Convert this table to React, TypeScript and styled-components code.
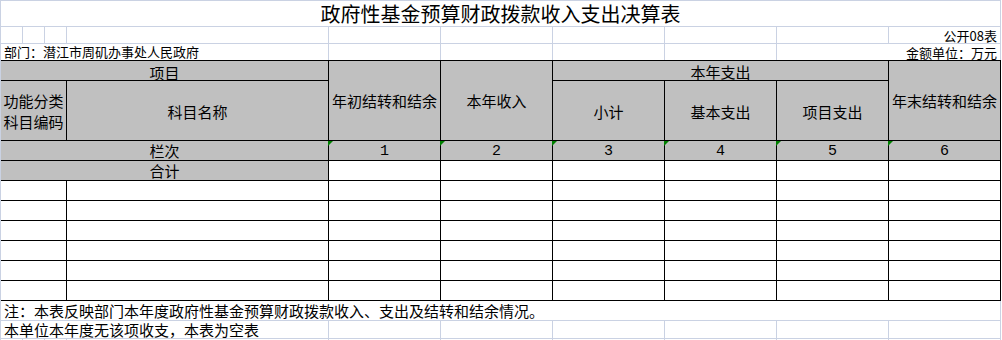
import styled, { createGlobalStyle } from "styled-components";

/* Colours */
const gridLine = "#cad2e3";
const headerGray = "#c0c0c0";
const flagGreen = "#008000";

/* Sheet columns outside the table: three narrow ones, the wide name column, six value columns */
const SHEET_COLS = "22px 22px 22px 262px repeat(6, 112px)";

const GlobalStyle = createGlobalStyle`
	body {
		margin: 0;
		background: #fff;
		color: #000;
		font-family: "Noto Sans CJK SC", "Noto Sans", sans-serif;
	}
`;

const Sheet = styled.div`
	width: 1000px;
	border-left: 1px solid ${gridLine};
	border-top: 1px solid ${gridLine};
`;

const TitleRow = styled.div`
	box-sizing: border-box;
	height: 26px;
	display: flex;
	align-items: flex-end;
	justify-content: center;
	padding-bottom: 2px;
	border-right: 1px solid ${gridLine};
	border-bottom: 1px solid ${gridLine};
	font-size: 20px;
	line-height: 20px;
`;

const SheetRow = styled.div<{ $height: number; $lined?: boolean }>`
	box-sizing: border-box;
	display: grid;
	grid-template-columns: ${SHEET_COLS};
	height: ${(p) => p.$height}px;
	border-bottom: ${(p) => (p.$lined ? `1px solid ${gridLine}` : "none")};
`;

const SheetCell = styled.div<{ $span?: number; $right?: boolean; $size?: number; $lift?: number }>`
	grid-column: span ${(p) => p.$span ?? 1};
	display: flex;
	align-items: flex-end;
	justify-content: ${(p) => (p.$right ? "flex-end" : "flex-start")};
	padding: 0 ${(p) => (p.$right ? 3 : 0)}px ${(p) => p.$lift ?? 1}px ${(p) => (p.$right ? 0 : 3)}px;
	border-right: 1px solid ${gridLine};
	font-size: ${(p) => p.$size ?? 13}px;
	line-height: ${(p) => p.$size ?? 13}px;
	white-space: nowrap;
`;

const NoteRow = styled.div`
	box-sizing: border-box;
	height: 20px;
	display: flex;
	align-items: flex-end;
	padding: 0 0 2px 3px;
	border-right: 1px solid ${gridLine};
	border-bottom: 1px solid ${gridLine};
	font-size: 15px;
	line-height: 15px;
	white-space: nowrap;
`;

const Table = styled.div`
	box-sizing: border-box;
	width: 1000px;
	display: grid;
	grid-template-columns: 65px 261px repeat(6, 111px);
	grid-template-rows: 19px 59px 19px 19px repeat(6, 19px);
	gap: 1px;
	padding: 1px 1px 1px 0;
	background: #000;
`;

const Cell = styled.div<{ $col?: string; $row?: string; $gray?: boolean; $drop?: number }>`
	grid-column: ${(p) => p.$col ?? "auto"};
	grid-row: ${(p) => p.$row ?? "auto"};
	display: flex;
	align-items: center;
	justify-content: center;
	text-align: center;
	padding-top: ${(p) => p.$drop ?? 0}px;
	background: ${(p) => (p.$gray ? headerGray : "#fff")};
	font-size: 15px;
	line-height: 15px;
`;

const StackedLabel = styled.span`
	display: flex;
	flex-direction: column;
	line-height: 21px;
`;

/* column number cells carry Excel's green "number stored as text" flag */
const NumberCell = styled(Cell)`
	position: relative;
	font-family: "Liberation Mono", "DejaVu Sans Mono", monospace;

	&::before {
		content: "";
		position: absolute;
		left: -1px;
		top: 0;
		border-top: 5px solid ${flagGreen};
		border-right: 5px solid transparent;
	}
`;

const valueColumns = [3, 4, 5, 6, 7, 8];

export default function App() {
	return (
		<>
			<GlobalStyle />
			<Sheet>
				<TitleRow>政府性基金预算财政拨款收入支出决算表</TitleRow>

				<SheetRow $height={17} $lined>
					{Array.from({ length: 9 }).map((_, i) => (
						<SheetCell key={i} />
					))}
					<SheetCell $right>公开08表</SheetCell>
				</SheetRow>

				<SheetRow $height={16}>
					<SheetCell $span={4} $lift={2}>
						部门：潜江市周矶办事处人民政府
					</SheetCell>
					<SheetCell />
					<SheetCell />
					<SheetCell />
					<SheetCell />
					<SheetCell $span={2} $right>
						金额单位：万元
					</SheetCell>
				</SheetRow>

				<Table>
					<Cell $col="1 / 3" $row="1" $gray $drop={3}>
						项目
					</Cell>
					<Cell $col="3" $row="1 / 3" $gray>
						年初结转和结余
					</Cell>
					<Cell $col="4" $row="1 / 3" $gray>
						本年收入
					</Cell>
					<Cell $col="5 / 8" $row="1" $gray $drop={1}>
						本年支出
					</Cell>
					<Cell $col="8" $row="1 / 3" $gray>
						年末结转和结余
					</Cell>

					<Cell $col="1" $row="2" $gray $drop={1}>
						<StackedLabel>
							<span>功能分类</span>
							<span>科目编码</span>
						</StackedLabel>
					</Cell>
					<Cell $col="2" $row="2" $gray $drop={1}>
						科目名称
					</Cell>
					<Cell $col="5" $row="2" $gray $drop={1}>
						小计
					</Cell>
					<Cell $col="6" $row="2" $gray $drop={1}>
						基本支出
					</Cell>
					<Cell $col="7" $row="2" $gray $drop={1}>
						项目支出
					</Cell>

					<Cell $col="1 / 3" $row="3" $gray>
						栏次
					</Cell>
					{valueColumns.map((col, i) => (
						<NumberCell key={col} $col={String(col)} $row="3" $gray $drop={2}>
							{i + 1}
						</NumberCell>
					))}

					<Cell $col="1 / 3" $row="4" $gray>
						合计
					</Cell>
					{valueColumns.map((col) => (
						<Cell key={col} $col={String(col)} $row="4" />
					))}

					{Array.from({ length: 6 * 8 }).map((_, i) => (
						<Cell key={`d${i}`} />
					))}
				</Table>

				<NoteRow>注：本表反映部门本年度政府性基金预算财政拨款收入、支出及结转和结余情况。</NoteRow>

				<SheetRow $height={18} $lined>
					<SheetCell $span={4} $size={15}>
						本单位本年度无该项收支，本表为空表
					</SheetCell>
					{Array.from({ length: 6 }).map((_, i) => (
						<SheetCell key={i} />
					))}
				</SheetRow>

				<SheetRow $height={4}>
					{Array.from({ length: 10 }).map((_, i) => (
						<SheetCell key={i} />
					))}
				</SheetRow>
			</Sheet>
		</>
	);
}
